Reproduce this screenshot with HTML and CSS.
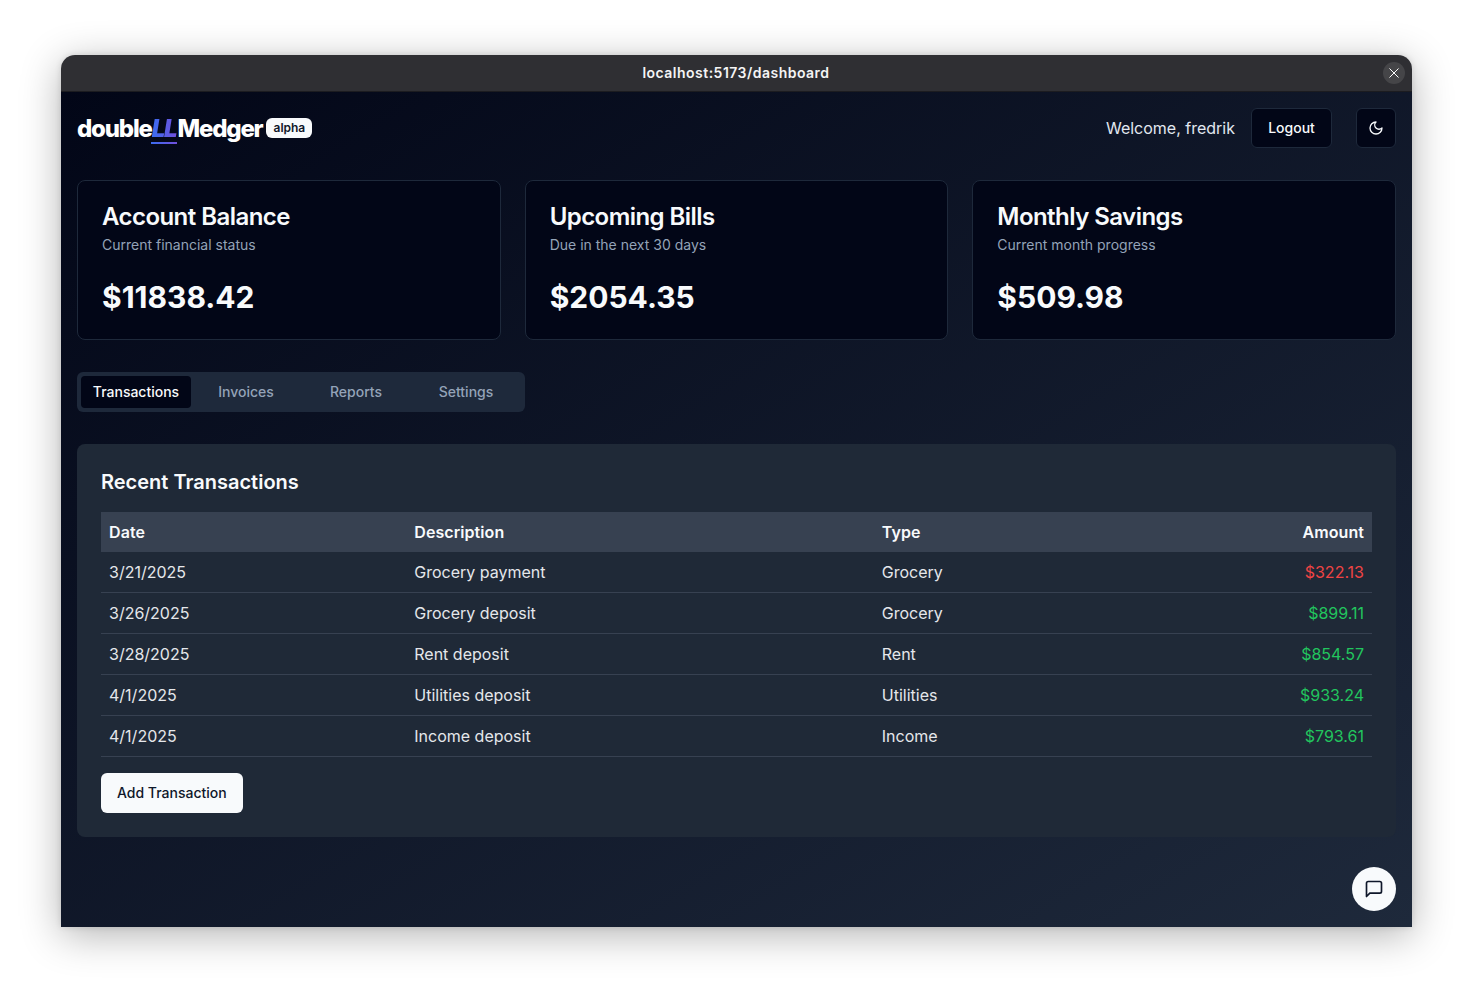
FILE: index.html
```html
<!DOCTYPE html>
<html lang="en">
<head>
<meta charset="utf-8">
<title>doubleLLMedger</title>
<link rel="stylesheet" href="styles.css">
</head>
<body>
<div class="window">
  <div class="titlebar">
    <span class="url">localhost:5173/dashboard</span>
    <button class="close" aria-label="Close">
      <svg width="12" height="12" viewBox="0 0 12 12" fill="none" stroke="#fff" stroke-width="1" stroke-linecap="round"><path d="M1.75 1.75l8.5 8.5M10.25 1.75l-8.5 8.5"/></svg>
    </button>
  </div>
  <div class="app">
    <header class="header">
      <div class="logo">
        <span class="brand">double<span class="ll">LL</span>Medger</span>
        <span class="badge">alpha</span>
      </div>
      <div class="actions">
        <span class="welcome">Welcome, fredrik</span>
        <button class="btn-dark btn-logout">Logout</button>
        <button class="btn-dark btn-icon" aria-label="Theme">
          <svg width="16" height="16" viewBox="0 0 24 24" fill="none" stroke="currentColor" stroke-width="2" stroke-linecap="round" stroke-linejoin="round"><path d="M12 3a6 6 0 0 0 9 9 9 9 0 1 1-9-9Z"/></svg>
        </button>
      </div>
    </header>
    <section class="cards">
      <div class="card">
        <h3 class="card-title">Account Balance</h3>
        <p class="card-desc">Current financial status</p>
        <p class="card-value">$11838.42</p>
      </div>
      <div class="card">
        <h3 class="card-title">Upcoming Bills</h3>
        <p class="card-desc">Due in the next 30 days</p>
        <p class="card-value">$2054.35</p>
      </div>
      <div class="card">
        <h3 class="card-title">Monthly Savings</h3>
        <p class="card-desc">Current month progress</p>
        <p class="card-value">$509.98</p>
      </div>
    </section>
    <nav class="tabs">
      <span class="tab active">Transactions</span>
      <span class="tab">Invoices</span>
      <span class="tab">Reports</span>
      <span class="tab">Settings</span>
    </nav>
    <section class="panel">
      <h2 class="panel-title">Recent Transactions</h2>
      <table class="table">
        <thead>
          <tr><th class="c-date">Date</th><th class="c-desc">Description</th><th class="c-type">Type</th><th class="num">Amount</th></tr>
        </thead>
        <tbody>
          <tr><td>3/21/2025</td><td>Grocery payment</td><td>Grocery</td><td class="num neg">$322.13</td></tr>
          <tr><td>3/26/2025</td><td>Grocery deposit</td><td>Grocery</td><td class="num pos">$899.11</td></tr>
          <tr><td>3/28/2025</td><td>Rent deposit</td><td>Rent</td><td class="num pos">$854.57</td></tr>
          <tr><td>4/1/2025</td><td>Utilities deposit</td><td>Utilities</td><td class="num pos">$933.24</td></tr>
          <tr><td>4/1/2025</td><td>Income deposit</td><td>Income</td><td class="num pos">$793.61</td></tr>
        </tbody>
      </table>
      <button class="btn-light">Add Transaction</button>
    </section>
    <button class="chat" aria-label="Chat">
      <svg width="20" height="20" viewBox="0 0 24 24" fill="none" stroke="currentColor" stroke-width="2" stroke-linecap="round" stroke-linejoin="round"><path d="M21 15a2 2 0 0 1-2 2H7l-4 4V5a2 2 0 0 1 2-2h14a2 2 0 0 1 2 2z"/></svg>
    </button>
  </div>
</div>
</body>
</html>
```
FILE: styles.css
```css
* { box-sizing: border-box; }
html, body { margin: 0; height: 100%; }
body {
  background: #fff;
  padding: 55px 61px 67px;
  font-family: Inter, "Liberation Sans", sans-serif;
  color: #f8fafc;
  overflow: hidden;
}
button { font-family: inherit; cursor: pointer; }
p, h2, h3 { margin: 0; }

.window {
  height: 872px;
  display: flex;
  flex-direction: column;
  border-radius: 14px 14px 0 0;
  overflow: hidden;
  box-shadow: 0 8px 40px rgba(0, 0, 0, 0.3), 0 0 6px rgba(0, 0, 0, 0.12);
}
.titlebar {
  flex: none;
  height: 37px;
  background: #2f2f33;
  border-bottom: 1px solid #1c1c20;
  display: flex;
  align-items: center;
  justify-content: center;
  position: relative;
}
.url {
  font-size: 14px;
  line-height: 20px;
  font-weight: 600;
  letter-spacing: 0.48px;
  color: #f4f4f5;
  margin-top: -1px;
  margin-right: 1px;
}
.close {
  position: absolute;
  right: 7px;
  top: 7px;
  width: 22px;
  height: 22px;
  border: 0;
  padding: 0;
  border-radius: 50%;
  background: #454548;
  display: flex;
  align-items: center;
  justify-content: center;
}
.app {
  flex: 1;
  position: relative;
  padding: 16px;
  background: linear-gradient(to bottom right, #020617 0%, #1e293b 100%);
}
.header {
  height: 40px;
  display: flex;
  align-items: center;
  justify-content: space-between;
}
.logo { display: flex; align-items: center; gap: 4px; }
.brand {
  font-size: 24px;
  line-height: 32px;
  font-weight: 800;
  letter-spacing: -1.2px;
  color: #fff;
  padding-top: 1px;
}
.ll {
  position: relative;
  display: inline-block;
  font-style: italic;
  font-weight: 900;
  color: transparent;
  background: linear-gradient(to right, #3b6cf0, #7150dc);
  -webkit-background-clip: text;
  background-clip: text;
  padding-right: 1px;
}
.ll::after {
  content: "";
  position: absolute;
  left: -1px;
  right: 0;
  bottom: 1px;
  height: 2px;
  background: linear-gradient(to right, #3b6cf0, #7150dc);
}
.badge {
  background: #f8fafc;
  color: #0f172a;
  font-size: 12px;
  font-weight: 600;
  line-height: 20px;
  padding: 0 7px;
  border-radius: 6px;
}
.actions { display: flex; align-items: center; gap: 16px; }
.welcome { font-size: 16px; line-height: 24px; color: #e2e8f0; }
.btn-dark {
  height: 40px;
  background: #020617;
  color: #f8fafc;
  border: 1px solid #1e293b;
  border-radius: 6px;
  font-size: 14px;
  line-height: 20px;
  font-weight: 500;
  display: flex;
  align-items: center;
  justify-content: center;
}
.btn-logout { width: 81px; }
.btn-icon { width: 40px; padding: 0; margin-left: 8px; }

.cards {
  margin-top: 32px;
  display: grid;
  grid-template-columns: repeat(3, 1fr);
  gap: 24px;
}
.card {
  height: 160px;
  padding: 24px;
  background: #020617;
  border: 1px solid #1e293b;
  border-radius: 8px;
}
.card-title {
  font-size: 24px;
  line-height: 24px;
  font-weight: 600;
  letter-spacing: -0.55px;
  color: #f8fafc;
}
.card-desc {
  margin-top: 6px;
  font-size: 14px;
  line-height: 20px;
  color: #94a3b8;
}
.card-value {
  margin-top: 24px;
  font-size: 30px;
  line-height: 36px;
  font-weight: 700;
  color: #f8fafc;
}

.tabs {
  margin-top: 32px;
  width: 448px;
  height: 40px;
  padding: 4px;
  display: grid;
  grid-template-columns: repeat(4, 1fr);
  background: #1e293b;
  border-radius: 6px;
}
.tab {
  display: flex;
  align-items: center;
  justify-content: center;
  font-size: 14px;
  line-height: 20px;
  font-weight: 500;
  color: #94a3b8;
  border-radius: 4px;
}
.tab.active { background: #020617; color: #f8fafc; }

.panel {
  margin-top: 32px;
  height: 393px;
  padding: 24px;
  background: #1f2937;
  border-radius: 8px;
}
.panel-title {
  font-size: 20px;
  line-height: 28px;
  font-weight: 600;
  color: #f8fafc;
}
.table {
  margin-top: 16px;
  width: 100%;
  border-collapse: separate;
  border-spacing: 0;
  table-layout: fixed;
  font-size: 16px;
  line-height: 24px;
}
.table th {
  height: 40px;
  padding: 0 8px;
  text-align: left;
  font-weight: 600;
  letter-spacing: 0.08px;
  background: #374151;
  color: #f8fafc;
}
.table td {
  height: 41px;
  padding: 0 8px;
  border-bottom: 1px solid #374151;
  color: #e5e7eb;
}
.c-date { width: 305.25px; }
.c-desc { width: 467.5px; }
.c-type { width: 300px; }
.table .num { text-align: right; }
.table .neg { color: #ef4444; }
.table .pos { color: #22c55e; }

.btn-light {
  display: block;
  margin-top: 16px;
  height: 40px;
  padding: 0 16px;
  background: #f8fafc;
  color: #0f172a;
  border: 0;
  border-radius: 6px;
  font-size: 14px;
  line-height: 20px;
  font-weight: 500;
}
.chat {
  position: absolute;
  right: 16px;
  bottom: 16px;
  width: 44px;
  height: 44px;
  padding: 0;
  border: 0;
  border-radius: 50%;
  background: #f8fafc;
  color: #0f172a;
  display: flex;
  align-items: center;
  justify-content: center;
}
```
